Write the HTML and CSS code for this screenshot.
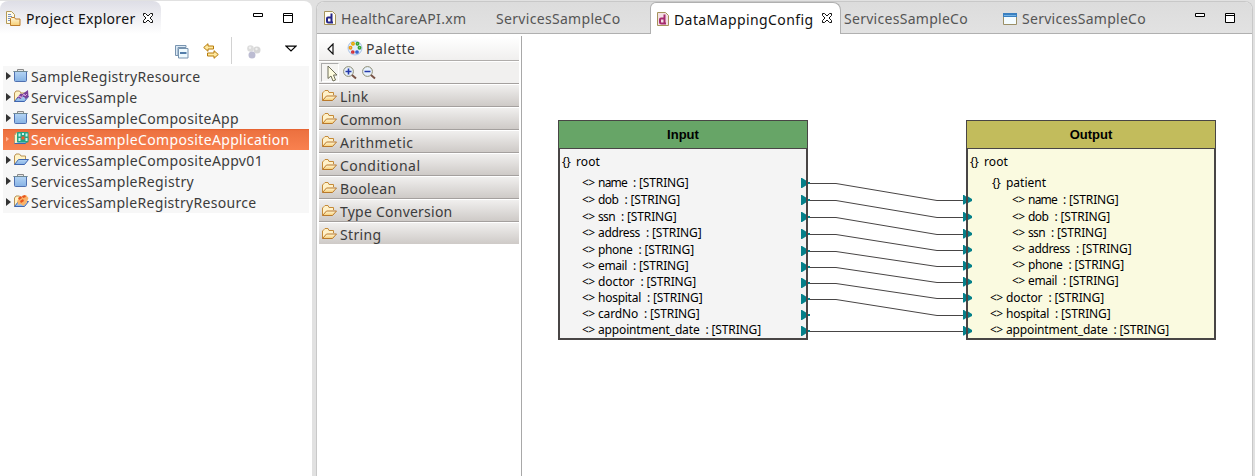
FILE: index.html
```
<!DOCTYPE html>
<html lang="en">
<head>
<meta charset="utf-8">
<title>Data Mapping</title>
<link rel="stylesheet" href="styles.css">
</head>
<body>
<svg width="0" height="0" class="defs">
  <defs>
    <linearGradient id="gBlue" x1="0" y1="0" x2="0" y2="1"><stop offset="0" stop-color="#b4d4f4"/><stop offset="1" stop-color="#86b2e4"/></linearGradient>
    <linearGradient id="gYellow" x1="0" y1="0" x2="0" y2="1"><stop offset="0" stop-color="#fff8dc"/><stop offset="1" stop-color="#f6cd72"/></linearGradient>
    <symbol id="project" viewBox="0 0 16 16"><path d="M4.500 4V1.500h6V4" fill="#e4e4e4" stroke="#8a8a8a"/><path d="M1.500 3.500h12v9q0 1-1 1h-10q-1 0-1-1z" fill="url(#gBlue)" stroke="#4f70b0"/><path d="M.3 3.500h14.400" stroke="#6f8894"/></symbol>
    <symbol id="folder" viewBox="0 0 16 16"><path d="M1.500 12.500V5L3 3.500l1-1h3L8 4.500h4.500V7" fill="#fff1c9" stroke="#c58a38"/><path d="M1.500 12.500l4-4.500h10l-4 4.500z" fill="url(#gYellow)" stroke="#b9792c"/></symbol>
    <symbol id="bluefolder" viewBox="0 0 16 16"><path d="M1.500 12.500V4L3 2h3.500L8 4h4.500v3.500" fill="#fff3c5" stroke="#b89155"/><path d="M1.500 12.500l4-5h10l-4 5z" fill="url(#gBlue)" stroke="#3e65b1"/></symbol>
    <symbol id="close" viewBox="0 0 12 12"><path d="M1.500 1.500h2L6 4l2.500-2.500h2v2L8 6l2.500 2.500v2h-2L6 8l-2.500 2.500h-2v-2L4 6 1.500 3.500z" fill="#fff" stroke="#111"/></symbol>
    <symbol id="max" viewBox="0 0 12 12"><path d="M1.500 1.500h9v9h-9zM1 3.500h10" fill="#fff" stroke="#000"/></symbol>
    <symbol id="min" viewBox="0 0 12 12"><path d="M1.500 1.500h9v3h-9z" fill="#fff" stroke="#000"/></symbol>
  </defs>
</svg>
<div class="app">
  <section class="explorer">
    <header class="explorer-head">
      <div class="explorer-tab">
        <svg class="i16" viewBox="0 0 16 16"><path d="M1.500.5h5l3 3v9h-8z" fill="#fffbe9" stroke="#b59a56"/><path d="M3 3.500h3M3 5.500h4M3 7.500h2M3 9.500h2" stroke="#7891c6"/><path d="M5.500 14.500v-7l1-1h3l1 1.500h4.500v6.500z" fill="url(#gYellow)" stroke="#bd7c2c"/></svg>
        <span class="fit" data-w="109.500">Project Explorer</span>
        <svg class="i12"><use href="#close"/></svg>
      </div>
      <div class="window-buttons"><svg class="i12"><use href="#min"/></svg><svg class="i12"><use href="#max"/></svg></div>
    </header>
    <div class="explorer-tools">
      <svg class="tool-collapse" viewBox="0 0 14 14"><path d="M.5 10.500V.5H11v2H3v8z" fill="#dbe9f5" stroke="#7894b0"/><path d="M3.500 3.500h9.500v9.500H3.500z" fill="#eefaff" stroke="#7894b0"/><path d="M5 8h6.500" stroke="#104887" stroke-width="1.400"/></svg>
      <svg class="i16 tool-link" viewBox="0 0 16 16"><path d="M.7 4.500L5 .7V3h5.500v3H5v2.300z" fill="#ffe9a0" stroke="#b67b0b"/><path d="M15.300 11.500L11 7.700V10H4.500v3H11v2.300z" fill="#ffe9a0" stroke="#b67b0b"/></svg>
      <span class="tool-separator"></span>
      <svg class="i16 tool-dots" viewBox="0 0 16 16"><circle cx="4.500" cy="4.500" r="3.300" fill="#dcdcdc"/><circle cx="11" cy="6" r="3.500" fill="#d6d6d6"/><circle cx="6" cy="11" r="3.500" fill="#bcbcd2"/><circle cx="4" cy="3.700" r="1.200" fill="#f1f1f1"/><circle cx="10.500" cy="5" r="1.200" fill="#f1f1f1"/></svg>
      <svg class="tool-menu" viewBox="0 0 12 7"><path d="M1 1.200h10L6 6z" fill="#fff" stroke="#000" stroke-width="1.200"/></svg>
    </div>
    <ul class="tree">
      <li><i class="twisty"></i><svg class="i16"><use href="#project"/></svg><span class="fit" data-w="169.500">SampleRegistryResource</span></li>
      <li><i class="twisty"></i><svg class="i16" viewBox="0 0 16 16"><use href="#bluefolder"/><path d="M3.500 9.500l4-5 2 .5 5.500-4 .5 7-3 2-2-3-3 3-2-1z" fill="#794199"/><path d="M5 8l2-1 1 2 3-4 1 2 2-2" fill="none" stroke="#d7a6e2"/></svg><span class="fit" data-w="106.500">ServicesSample</span></li>
      <li><i class="twisty"></i><svg class="i16"><use href="#project"/></svg><span class="fit" data-w="208">ServicesSampleCompositeApp</span></li>
      <li class="selected"><i class="twisty"></i><svg class="i16" viewBox="0 0 16 16"><path d="M1.500 12.500v-8l2-3h3v11z" fill="#fff3c5" stroke="#a99b72"/><path d="M1.500 12.500h11l3-5" fill="#a7caef" stroke="#3e65b1"/><rect x="4" y="1" width="11.500" height="10.500" rx="1" fill="#24a583"/><path d="M5.500 2.500h2v3h-2zM9 2h2v2H9zM12.500 2.500h2v3h-2zM5.500 7h2v3h-2zM12.500 7h2v3h-2z" fill="#c8f4f2"/><path d="M8.500 5.500h3v3h-3z" fill="#f05a2c"/></svg><span class="fit" data-w="258.500">ServicesSampleCompositeApplication</span></li>
      <li><i class="twisty"></i><svg class="i16"><use href="#bluefolder"/></svg><span class="fit" data-w="232">ServicesSampleCompositeAppv01</span></li>
      <li><i class="twisty"></i><svg class="i16"><use href="#project"/></svg><span class="fit" data-w="163">ServicesSampleRegistry</span></li>
      <li><i class="twisty"></i><svg class="i16" viewBox="0 0 16 16"><use href="#bluefolder"/><path d="M4 7l5-5 4-1 2.500 3-2 5-3 3-3-2-2 1z" fill="#f8b36a"/><path d="M5 4l3-2 1 2-3 2zM9 2l3-1 1 2-3 1zM7 7l3-2 1 2-3 2z" fill="#e8531d"/></svg><span class="fit" data-w="225.500">ServicesSampleRegistryResource</span></li>
    </ul>
  </section>

  <section class="editor">
    <header class="tabs">
      <div class="tab tab-api"><svg class="doc" viewBox="0 0 12 14"><path d="M.5.5h8l3 3v10H.5z" fill="#fffdf0" stroke="#a5935a"/><path d="M7.500 2.500v9h1.500M7.500 6.500H4q-1 0-1 1V10q0 1.500 1.500 1.500h3" fill="none" stroke="#26268a" stroke-width="2"/></svg><span class="fit" data-w="125.500">HealthCareAPI.xm</span></div>
      <div class="tab tab-second"><span class="fit" data-w="124.500">ServicesSampleCo</span></div>
      <div class="tab tab-active"><svg class="doc" viewBox="0 0 12 14"><path d="M.5.5h8l3 3v10H.5z" fill="#f4dfe4" stroke="#a5935a"/><path d="M7.500 2.500v9h1.500M7.500 6.500H4q-1 0-1 1V10q0 1.500 1.500 1.500h3" fill="none" stroke="#a52a6e" stroke-width="2"/></svg><span class="fit" data-w="139.500">DataMappingConfig</span><svg class="i12"><use href="#close"/></svg></div>
      <div class="tab tab-fourth"><span class="fit" data-w="124">ServicesSampleCo</span></div>
      <div class="tab tab-fifth"><svg class="win" viewBox="0 0 14 12"><path d="M.5.5h13v11H.5z" fill="#f4fcff" stroke="#9b8f66"/><path d="M0 0h14v4H0z" fill="#3a7fc0"/><path d="M1 2.500h12" stroke="#76b4e4"/></svg><span class="fit" data-w="124">ServicesSampleCo</span></div>
      <div class="window-buttons"><svg class="i12"><use href="#min"/></svg><svg class="i12"><use href="#max"/></svg></div>
    </header>
    <div class="editor-body">
      <aside class="palette">
        <div class="palette-title">
          <svg class="palette-arrow" viewBox="0 0 7 12"><path d="M6 1v10L1 6z" fill="#fff" stroke="#111" stroke-width="1.200"/></svg>
          <svg class="i16" viewBox="0 0 16 16"><circle cx="8" cy="8" r="7" fill="#e2edfb" stroke="#aac3e6"/><g fill="none" stroke-width="1.500"><circle cx="6" cy="3.800" r="1.200" stroke="#e8a900"/><circle cx="10.500" cy="3.800" r="1.200" stroke="#35a332"/><circle cx="3.500" cy="7.800" r="1.200" stroke="#ed9a13"/><circle cx="12.500" cy="7.800" r="1.200" stroke="#35a332"/><circle cx="5.800" cy="12" r="1.100" stroke="#d32c32"/><circle cx="10" cy="12" r="1.100" stroke="#2e5ccc"/></g></svg>
          <span class="fit" data-w="49.500">Palette</span>
        </div>
        <div class="palette-tools">
          <span class="pointer"><svg viewBox="0 0 11 17"><path d="M1 1v12.500l3-2.500 2 5 2.500-1-2-5H10z" fill="#fffde0" stroke="#6d6d58"/></svg></span>
          <svg class="i16" viewBox="0 0 16 16"><circle cx="6.500" cy="6.500" r="4.900" fill="#e7f1fc" stroke="#8b8b72"/><path d="M10 10l4 3.500" stroke="#795346" stroke-width="2"/><path d="M3.500 6.500h6M6.500 3.500v6" stroke="#2438a8" stroke-width="1.600"/></svg>
          <svg class="i16" viewBox="0 0 16 16"><circle cx="6.500" cy="6.500" r="4.900" fill="#e7f1fc" stroke="#8b8b72"/><path d="M10 10l4 3.500" stroke="#795346" stroke-width="2"/><path d="M3.500 6.500h6" stroke="#2438a8" stroke-width="1.600"/></svg>
        </div>
        <div class="drawer"><svg class="i16"><use href="#folder"/></svg><span class="fit" data-w="28.500">Link</span></div>
        <div class="drawer"><svg class="i16"><use href="#folder"/></svg><span class="fit" data-w="61.500">Common</span></div>
        <div class="drawer"><svg class="i16"><use href="#folder"/></svg><span class="fit" data-w="73.500">Arithmetic</span></div>
        <div class="drawer"><svg class="i16"><use href="#folder"/></svg><span class="fit" data-w="80.500">Conditional</span></div>
        <div class="drawer"><svg class="i16"><use href="#folder"/></svg><span class="fit" data-w="56.500">Boolean</span></div>
        <div class="drawer"><svg class="i16"><use href="#folder"/></svg><span class="fit" data-w="112.500">Type Conversion</span></div>
        <div class="drawer"><svg class="i16"><use href="#folder"/></svg><span class="fit" data-w="41.500">String</span></div>
      </aside>
      <main class="canvas">
        <article class="node input"><h2>Input</h2><div class="fields" id="input-fields"></div></article>
        <article class="node output"><h2>Output</h2><div class="fields" id="output-fields"></div></article>
        <svg class="links" id="links" viewBox="522 34 730 442"></svg>
      </main>
    </div>
  </section>
</div>
<script src="app.js"></script>
</body>
</html>
```
FILE: styles.css
```
* { box-sizing: border-box; }
body { margin: 0; width: 1255px; height: 476px; overflow: hidden; background: #e1e1e1; font-family: "Noto Sans", "Open Sans", sans-serif; font-size: 14px; color: #3c3c3c; }
svg { display: block; flex: none; }
.defs { position: absolute; }
.i16 { width: 16px; height: 16px; }
.i12 { width: 12px; height: 12px; }
.fit { display: inline-block; white-space: pre; flex: none; }
.app { display: flex; height: 476px; gap: 4px; padding-top: 1px; }

.explorer { width: 312px; background: #fff; border-radius: 0 8px 0 0; }
.explorer-head { display: flex; height: 33px; justify-content: space-between; }
.explorer-tab { display: flex; align-items: center; width: 161px; padding: 2px 0 0 5px; border-radius: 8px 8px 0 0; background: linear-gradient(#dedee6, #fff); color: #111; }
.explorer-tab .fit { margin: 0 7px 0 5px; }
.explorer-tab .i12 { margin: -1px 0 0 -1px; }
.window-buttons { display: flex; gap: 18px; padding: 11px 18px 0 0; }
.explorer-tools { display: flex; height: 32px; padding-left: 175px; align-items: flex-start; }
.tool-collapse { width: 14px; height: 14px; margin-top: 11px; }
.tool-link { margin: 9px 0 0 14px; }
.tool-separator { width: 1px; height: 27px; margin: 3px 14px 0 12px; background: #d2d2d2; }
.tool-dots { margin-top: 10px; }
.tool-menu { width: 12px; height: 7px; margin: 11px 0 0 23px; }
.tree { width: 306px; margin: 0 0 0 3px; padding: 0; list-style: none; background: #f7f7f7; }
.tree li { display: flex; align-items: center; height: 21px; padding-left: 3px; }
.tree li svg { margin: -1px 2px 0 3px; }
.tree .fit { margin-top: -1px; }
.twisty { width: 5px; height: 8px; margin: -1px -1px 0 0; background: #333; clip-path: polygon(0 0, 100% 50%, 0 100%); }
.tree .selected { background: linear-gradient(#e55f2c, #ec7140 8%, #f9814f); color: #fff; }
.selected .twisty { height: 5px; width: 3px; margin-right: 1px; background: #ffb798; }

.editor { width: 937px; height: 475px; border: 1px solid #c8c8c8; border-bottom: 0; border-radius: 8px 8px 0 0; background: #fff; overflow: hidden; }
.tabs { display: flex; height: 32px; background: linear-gradient(#dcdcdc, #e2e2e2); border-bottom: 1px solid #b0b0b0; color: #555; }
.tab { display: flex; align-items: center; padding-top: 2px; }
.doc { width: 12px; height: 14px; margin-top: -2px; }
.tab-api { width: 179px; padding-left: 7px; }
.tab-api .doc { margin-right: 5px; }
.tab-second { width: 154px; }
.tab-active { width: 191px; height: 32px; padding-left: 6px; border: 1px solid #b0b0b0; border-width: 1px 1px 0; border-radius: 6px 8px 0 0; background: #fff; color: #111; }
.tab-active .doc { margin-right: 5px; }
.tab-active .i12 { margin: -3px 0 0 7px; }
.tab-fourth { width: 162px; padding-left: 3px; }
.win { width: 14px; height: 12px; margin-right: 5px; }
.tabs .window-buttons { margin-left: auto; padding: 10px 16px 0 0; }
.editor-body { display: flex; height: 443px; }
.palette { width: 205px; flex: none; margin-top: 2px; padding: 1px 0 0 2px; border-right: 1px solid #a8a8a8; }
.palette > div { width: 200px; }
.palette-title { display: flex; align-items: center; height: 24px; padding-left: 8px; background: linear-gradient(#fff, #f0efee); border-bottom: 1px solid #b0adab; }
.palette-arrow { width: 7px; height: 12px; margin-right: 13px; }
.palette-title .i16 { margin-right: 3px; margin-top: -2px; }
.palette-tools { display: flex; height: 23px; padding: 0 0 1px 2px; background: #f1f0ef; gap: 3px; align-items: center; border-top: 1px solid #fff; }
.pointer { width: 18px; height: 19px; padding: 1px 0 0 5px; border: 1px solid; border-color: #aaa #fff #fff #aaa; background: #f5f4f2; }
.pointer svg { width: 11px; height: 17px; }
.drawer { display: flex; align-items: center; gap: 3px; height: 23px; padding: 2px 0 0 2px; border-top: 1px solid #a4a09e; box-shadow: inset 0 1px #fff; background: linear-gradient(#f2f1f0, #cecac7); }
.palette-tools + .drawer { margin-top: -1px; }

.canvas { position: relative; flex: 1; color: #000; font-size: 12px; }
.node { position: absolute; top: 86px; width: 250px; height: 220px; border: 2px solid #484545; border-top-width: 1px; }
.input { left: 36px; background: #f4f4f4; }
.output { left: 444px; background: #fafae0; }
.node h2 { margin: 0 -1px; height: 28px; border-bottom: 1px solid #484545; font: bold 13px/27px "Liberation Sans", Arial, sans-serif; text-align: center; }
.input h2 { background: #67a567; }
.output h2 { background: #c2bc5c; }
.field { display: flex; align-items: center; height: 16px; line-height: 16px; }
.field.root { height: 26px; padding: 0 0 1px 2px; }
.field.tall { height: 17px; padding-bottom: 1px; }
.field.level1 { padding-left: 22px; }
.field.level2 { padding-left: 44px; }
.patient { padding-left: 24px; }
.mark { width: 16px; font-size: 12px; letter-spacing: -.7px; }
.brace { width: 14px; font-size: 12px; letter-spacing: -.3px; }
.links { position: absolute; left: 0; top: 0; width: 730px; height: 442px; pointer-events: none; }
```
FILE: app.js
```
const widths = { root: 24, patient: 40, name: 29, dob: 20.5, ssn: 17, address: 42, phone: 34.5, email: 29, doctor: 36.5, hospital: 43, cardNo: 40, appointment_date: 101.5 };

function braces(name, cls) {
  return `<div class="field ${cls}"><span class="brace">{}</span><span class="fit" data-w="${widths[name]}">${name}</span></div>`;
}
function field(name, cls) {
  return `<div class="field ${cls}"><span class="mark">&lt;&gt;</span><span class="fit" data-w="${widths[name]}">${name}</span><span class="fit" data-w="61.5">  : [STRING]</span></div>`;
}

document.getElementById('input-fields').innerHTML = braces('root', 'root') +
  [['name', 1], ['dob', 1], ['ssn', 0], ['address', 1], ['phone', 0], ['email', 0], ['doctor', 0], ['hospital', 0], ['cardNo', 0], ['appointment_date', 0]]
    .map(([n, t]) => field(n, 'level1' + (t ? ' tall' : ''))).join('');

document.getElementById('output-fields').innerHTML = braces('root', 'root') + braces('patient', 'patient tall') +
  [['name', 2, 1], ['dob', 2, 0], ['ssn', 2, 0], ['address', 2, 0], ['phone', 2, 0], ['email', 2, 1], ['doctor', 1, 0], ['hospital', 1, 0], ['appointment_date', 1, 0]]
    .map(([n, l, t]) => field(n, 'level' + l + (t ? ' tall' : ''))).join('');

// Spread each label's letters over its column width.
document.querySelectorAll('.fit').forEach(el => {
  const w = el.getBoundingClientRect().width;
  el.style.letterSpacing = (parseFloat(el.dataset.w) - w) / el.textContent.length + 'px';
});

const sources = [183, 200, 217, 234, 251, 267, 283, 299, 315, 331];
const targets = [200, 217, 234, 250, 266, 282, 298, 315, 331];
const pairs = [[0, 0], [1, 1], [2, 2], [3, 3], [4, 4], [5, 5], [6, 6], [7, 7], [9, 8]];
let out = '';
sources.forEach(y => { out += `<path d="M801 ${y - 5}h1l4 2.5v1.5h4v2h-4v1.5l-4 2.5h-1z" fill="#04808a"/>`; });
targets.forEach(y => { out += `<path d="M963 ${y - 5}h1l2 1.500h2l4 2.500v2l-4 2h-2l-2 1.500h-1z" fill="#04808a"/>`; });
pairs.forEach(([s, t]) => {
  out += `<path d="M810 ${sources[s] + .5}H836L937 ${targets[t] + .5}H963" fill="none" stroke="#484545"/>`;
});
out += '<path d="M807 149v190M967 149v190" stroke="#484545" stroke-width="2"/>';
document.getElementById('links').innerHTML = out;
```
